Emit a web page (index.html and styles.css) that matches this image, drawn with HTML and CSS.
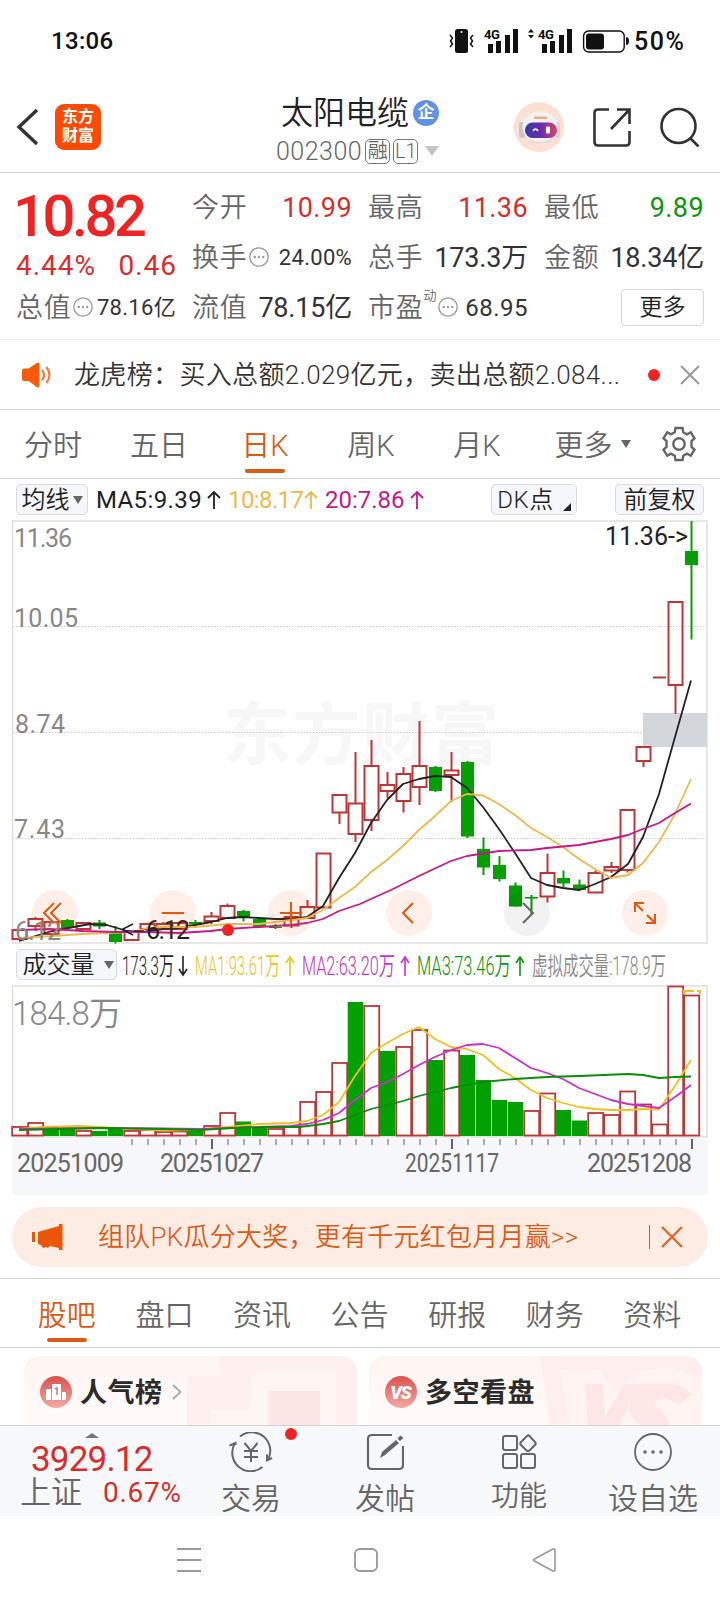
FILE: index.html
```html
<!DOCTYPE html>
<html lang="zh-CN">
<head>
    <meta charset="UTF-8">
    <meta name="viewport" content="width=device-width, initial-scale=1.0">
    <title>太阳电缆 002300</title>
    <link rel="stylesheet" href="styles.css">
</head>
<body>
    <!-- Shared icons -->
    <svg class="defs" width="0" height="0">
        <symbol id="arrow-up" viewBox="0 0 14 20"><path d="M7 19V2M1 8l6-6 6 6" fill="none" stroke="currentColor" stroke-width="1.8"/></symbol>
        <symbol id="dots" viewBox="0 0 20 20"><circle cx="10" cy="10" r="9.2" fill="none" stroke="#999" stroke-width="1.3"/><circle cx="5.8" cy="10" r="1.2" fill="#999"/><circle cx="10" cy="10" r="1.2" fill="#999"/><circle cx="14.2" cy="10" r="1.2" fill="#999"/></symbol>
        <linearGradient id="badge" x1="0" y1="0" x2="0" y2="1"><stop offset="0" stop-color="#d9504c"/><stop offset="1" stop-color="#f3aaa5"/></linearGradient>
        <linearGradient id="visor"><stop offset="0" stop-color="#3b3aa5"/><stop offset=".5" stop-color="#6a2bb0"/><stop offset="1" stop-color="#d8456d"/></linearGradient>
    </svg>

    <div class="status-bar">
        <span class="clock">13:06</span>
        <svg class="signals" width="176" height="30" viewBox="0 0 176 30" fill="#111">
            <rect x="6" y="3" width="13" height="24" rx="2.5"/>
            <circle cx="12.5" cy="6" r="1" fill="#fff"/>
            <path d="M1 9l2.500 3-2 3 2 3-2.500 3M24 9l-2.500 3 2 3-2 3 2.500 3" fill="none" stroke="#111" stroke-width="1.5"/>
            <text class="net" x="35" y="12.5">4G</text>
            <path d="M39 18h5v9h-5zM47 15h5v12h-5zM56 9h5v18h-5zM64 3h5v24h-5zM93 18h5v9h-5zM101 15h5v12h-5zM110 9h5v18h-5zM118 3h5v24h-5z"/>
            <path d="M79 6.500l3-3.500 3 3.500zM79 9l3 3.500 3-3.500z"/>
            <text class="net" x="89" y="12.5">4G</text>
            <rect x="134.6" y="5" width="40.600" height="21" rx="5" fill="none" stroke="#111" stroke-width="1.4"/>
            <rect x="137" y="7.5" width="18" height="16" rx="3"/>
        </svg>
        <svg class="battery-tip" width="3" height="8"><path d="M0 0q3 0 3 4t-3 4z" fill="#111"/></svg>
        <span class="battery">50%</span>
    </div>

    <header class="header">
        <div class="header-left">
            <svg width="24" height="40" viewBox="0 0 24 40"><path d="M21 3L3 20l18 17" fill="none" stroke="#333" stroke-width="3.4"/></svg>
            <div class="logo">东方<br>财富</div>
        </div>
        <div class="stock">
            <div class="stock-name">太阳电缆<span class="company">企</span></div>
            <div class="stock-code">002300<span class="tag">融</span><span class="tag">L1</span><i class="caret-lg"></i></div>
        </div>
        <div class="header-right">
            <svg width="50" height="50" viewBox="0 0 50 50">
                <circle cx="25" cy="25" r="25" fill="#fde0d2"/>
                <path d="M6 13l4 3 4-3-1 8-5 2zM44 11l-5 5-4-2 3 8 4 1z" fill="#eee9ea"/>
                <rect x="5" y="20" width="6" height="16" rx="3" fill="#c9c5cc"/>
                <rect x="40" y="20" width="6" height="16" rx="3" fill="#d7d3d8"/>
                <ellipse cx="26" cy="25" rx="17.5" ry="15.5" fill="#f3f1f2"/>
                <rect x="11" y="20.5" width="32" height="15.5" rx="7.5" fill="url(#visor)"/>
                <path d="M20 14.500h13v2.500h-13z" fill="#e8b184"/>
                <path d="M19 29q2.500-4 5 0" fill="none" stroke="#fff" stroke-width="1.6"/>
                <rect x="32" y="24.5" width="4" height="7" rx="1" fill="#fff"/>
                <path d="M14 37q12 6 24 0l-2 4H17z" fill="#dedade"/>
            </svg>
            <svg width="38" height="39" viewBox="0 0 38 39"><path d="M16 1.500H5q-3.500 0-3.500 3.500v29q0 3.500 3.500 3.500h28q3.500 0 3.500-3.500V23M24 1.500h12.500V16M36.500 1.500L18 21" fill="none" stroke="#333" stroke-width="2.6"/></svg>
            <svg width="40" height="40" viewBox="0 0 40 40"><circle cx="18.5" cy="19" r="17" fill="none" stroke="#333" stroke-width="2.6"/><path d="M30.500 31.500l8 8" stroke="#333" stroke-width="2.6"/></svg>
        </div>
    </header>

    <section class="quote">
        <div class="last">
            <div class="price">10.82</div>
            <div class="change"><span>4.44%</span><span>0.46</span></div>
        </div>
        <div class="cell"><label>今开</label><b class="num red">10.99</b></div>
        <div class="cell"><label>最高</label><b class="num red">11.36</b></div>
        <div class="cell"><label>最低</label><b class="num green">9.89</b></div>
        <div class="cell"><label>换手</label><svg width="20" height="20"><use href="#dots"/></svg><b class="small">24.00%</b></div>
        <div class="cell"><label>总手</label><b>173.3万</b></div>
        <div class="cell"><label>金额</label><b>18.34亿</b></div>
        <div class="cell"><label>总值</label><svg width="20" height="20"><use href="#dots"/></svg><b class="small">78.16亿</b></div>
        <div class="cell"><label>流值</label><b>78.15亿</b></div>
        <div class="cell"><label>市盈</label><sup>动</sup><svg width="20" height="20"><use href="#dots"/></svg><b class="medium">68.95</b></div>
        <div class="cell"><button class="more">更多</button></div>
    </section>

    <section class="notice">
        <svg width="30" height="26" viewBox="0 0 30 26"><path d="M0 8.500q0-2 2-2h4q1 0 2-1L14 1.500q3.500-2.500 3.500 1v21q0 3.500-3.500 1L8 20q-1-1-2-1H2q-2 0-2-2z" fill="#ff5a0a"/><path d="M20 8q4 5 0 10M24.500 5q6 8 0 16" fill="none" stroke="#f47a3c" stroke-width="2.2"/></svg>
        <span class="notice-text">龙虎榜：买入总额2.029亿元，卖出总额2.084...</span>
        <i class="dot"></i>
        <svg width="20" height="20" viewBox="0 0 20 20"><path d="M1 1l18 18M19 1L1 19" stroke="#999" stroke-width="2"/></svg>
    </section>

    <nav class="period-tabs">
        <span>分时</span>
        <span>五日</span>
        <span class="active">日K</span>
        <span>周K</span>
        <span>月K</span>
        <span class="wide">更多<i class="caret"></i></span>
        <svg width="36" height="36" viewBox="0 0 36 36" fill="none" stroke="#666" stroke-width="2.4"><path d="M14.500 2h7l.8 4.300 3.700 2.100 3.800-2.100 3.700 6-3 2.800v5.800l3 2.800-3.700 6-3.800-2.100-3.700 2.100-.8 4.300h-7l-.8-4.300-3.700-2.100-3.800 2.100-3.700-6 3-2.800v-5.800l-3-2.800 3.700-6L10 8.400l3.700-2.100z"/><circle cx="18" cy="18" r="5.7"/></svg>
    </nav>

    <div class="legend">
        <button class="pill ma-btn">均线<i class="caret"></i></button>
        <span class="ma ma5">MA5:9.39<svg width="14" height="20"><use href="#arrow-up"/></svg></span>
        <span class="ma ma10">10:8.17<svg width="14" height="20"><use href="#arrow-up"/></svg></span>
        <span class="ma ma20">20:7.86<svg width="14" height="20"><use href="#arrow-up"/></svg></span>
        <button class="pill dk-btn">DK点<i class="corner"></i></button>
        <button class="pill fq-btn">前复权</button>
    </div>

    <div class="chart">
        <svg id="kline" width="720" height="424" viewBox="0 520 720 424"></svg>
        <div class="chart-tools">
            <span class="tool"><svg viewBox="0 0 46 46"><path d="M22 13L12 23l10 10M29 13L19 23l10 10"/></svg></span>
            <span class="tool"><svg viewBox="0 0 46 46"><path d="M12 23h22"/></svg></span>
            <span class="tool"><svg viewBox="0 0 46 46"><path d="M12 23h22M23 12v22"/></svg></span>
            <span class="tool"><svg viewBox="0 0 46 46"><path d="M27 13L17 23l10 10"/></svg></span>
            <span class="tool gray"><svg viewBox="0 0 46 46"><path d="M19 13l10 10-10 10"/></svg></span>
            <span class="tool"><svg viewBox="0 0 46 46"><path d="M13 22v-9h9M13 13l8 8M25 25l8 8M24 33h9v-9"/></svg></span>
        </div>
    </div>

    <div class="legend volume-legend">
        <button class="pill vol-btn">成交量<i class="caret"></i></button>
        <svg width="555" height="40" viewBox="117 944 555 40">
            <g class="vol-text">
                <text x="122" y="974" textLength="52" lengthAdjust="spacingAndGlyphs" fill="#222">173.3万</text>
                <text x="195" y="974" textLength="85" lengthAdjust="spacingAndGlyphs" fill="#efc11f">MA1:93.61万</text>
                <text x="302" y="974" textLength="93" lengthAdjust="spacingAndGlyphs" fill="#c832c8">MA2:63.20万</text>
                <text x="417" y="974" textLength="94" lengthAdjust="spacingAndGlyphs" fill="#0a960a">MA3:73.46万</text>
                <text x="532" y="974" textLength="134" lengthAdjust="spacingAndGlyphs" fill="#888">虚拟成交量:178.9万</text>
            </g>
            <g fill="none" stroke-width="1.6">
                <path d="M183 955v19M179 968l4 6 4-6" stroke="#222"/>
                <path d="M290 975v-19M286 962l4-6 4 6" stroke="#efc11f"/>
                <path d="M405 975v-19M401 962l4-6 4 6" stroke="#c832c8"/>
                <path d="M520 975v-19M516 962l4-6 4 6" stroke="#0a960a"/>
            </g>
        </svg>
    </div>

    <div class="volume">
        <svg id="volume" width="720" height="211" viewBox="0 985 720 211"></svg>
    </div>

    <div class="banner">
        <svg width="31" height="28" viewBox="0 0 31 28" fill="#eb5503"><path d="M0 9h3v10H0zM6 9l21-6V1h3.500v26H27v-2l-9-2-2 2-2-1-3 1-2-3-3-1z"/></svg>
        <span class="banner-text">组队PK瓜分大奖，更有千元红包月月赢&gt;&gt;</span>
        <i class="divider"></i>
        <svg width="22" height="22" viewBox="0 0 22 22"><path d="M1 1l20 20M21 1L1 21" stroke="#e4662a" stroke-width="2.4"/></svg>
    </div>

    <nav class="info-tabs">
        <span class="active">股吧</span>
        <span>盘口</span>
        <span>资讯</span>
        <span>公告</span>
        <span>研报</span>
        <span>财务</span>
        <span>资料</span>
    </nav>

    <section class="cards">
        <div class="card">
            <svg class="card-bg" width="170" height="70" viewBox="0 0 170 70"><path d="M32 0h138v70H0V20h32z" fill="#fef0ef"/><path d="M65 16h84v54H24V54h38z" fill="#fff5f3"/><path d="M82 35h51v35H82z" fill="#fbe5e5"/></svg>
            <svg width="32" height="32" viewBox="0 0 32 32"><circle cx="16" cy="16" r="16" fill="url(#badge)"/><path d="M6 13h5v11H6zM12 8h9v16h-9zM22 16h4v8h-4z" fill="#fff"/><path d="M15 13l2-1v7" fill="none" stroke="#dd716c" stroke-width="1.5"/></svg>
            <span class="card-title">人气榜</span>
            <svg width="10" height="16" viewBox="0 0 10 16"><path d="M1 1l7.500 7L1 15" fill="none" stroke="#aaa" stroke-width="1.8"/></svg>
        </div>
        <div class="card">
            <svg class="card-bg" width="162" height="70" viewBox="0 0 162 70"><path d="M0 0h162v70H10z" fill="#feefee"/><path d="M20 14h40l18 26 14-20q12-8 42-8l28 12v46H30z" fill="#fff4f2"/><path d="M45 28h18l2 32 20-32h45q12 0 22 10l-12 11q-8-7-20-6-12 2-2 9 8 4 12 18h-28q-14-8-12-22L78 70H48z" fill="#fce6e6"/></svg>
            <svg width="32" height="32" viewBox="0 0 32 32"><circle cx="16" cy="16" r="16" fill="url(#badge)"/><text class="vs" x="15.5" y="23">VS</text></svg>
            <span class="card-title">多空看盘</span>
        </div>
    </section>

    <footer class="bottom-bar">
        <div class="index">
            <i class="caret-up"></i>
            <div class="index-value">3929.12</div>
            <div class="index-row"><span>上证</span><span class="index-change">0.67%</span></div>
        </div>
        <div class="action">
            <svg width="44" height="40" viewBox="0 0 44 40" fill="none" stroke="#666" stroke-width="2"><path d="M11 4.500A18.500 18.500 0 0 1 38.500 28.500M38 22.500v6l5-2.500M33.500 35A18.500 18.500 0 0 1 6 11M0.500 13.500L6.500 11v2M15.500 11l6.500 8 6.500-8M15 19h14M15 25h14M22 19v11"/></svg>
            <span>交易</span>
            <i class="dot"></i>
        </div>
        <div class="action">
            <svg width="38" height="40" viewBox="0 0 38 40" fill="none" stroke="#666" stroke-width="2.2"><path d="M26 3H6Q2 3 2 7v26q0 4 4 4h27q4 0 4-4V14"/><path d="M14 26l2-6L30 8l3 3-14 12zM31.500 6.500l3-3 3 2.500-3.500 3z" fill="#666" stroke="none"/></svg>
            <span>发帖</span>
        </div>
        <div class="action">
            <svg width="36" height="40" viewBox="0 0 36 40" fill="none" stroke="#666" stroke-width="2"><rect x="2" y="4" width="14" height="14" rx="2"/><rect x="2" y="22" width="14" height="14" rx="2"/><rect x="20" y="22" width="14" height="14" rx="2"/><path d="M26 4l-6 6q-1.500 1.500 0 3l5.500 5.500q1.500 1.500 3 0L34 13q1.500-1.500 0-3l-5.500-6q-1.300-1.200-2.500 0z"/></svg>
            <span class="narrow">功能</span>
        </div>
        <div class="action">
            <svg width="40" height="40" viewBox="0 0 40 40"><circle cx="20" cy="20" r="18" fill="none" stroke="#666" stroke-width="1.8"/><g fill="#666"><circle cx="12" cy="20" r="1.8"/><circle cx="20" cy="20" r="1.8"/><circle cx="28" cy="20" r="1.8"/></g></svg>
            <span>设自选</span>
        </div>
    </footer>

    <div class="system-nav">
        <svg width="24" height="26" viewBox="0 0 24 26"><path d="M0 2h24M0 13h24M0 24h24" stroke="#999" stroke-width="1.8"/></svg>
        <svg width="26" height="26" viewBox="0 0 26 26"><rect x="2" y="2" width="22" height="22" rx="5" fill="none" stroke="#999" stroke-width="1.8"/></svg>
        <svg width="26" height="26" viewBox="0 0 26 26"><path d="M3.500 12L21 2.500q3-1.500 3 1v19q0 2.500-3 1L3.500 14q-2-1 0-2z" fill="none" stroke="#999" stroke-width="1.6"/></svg>
    </div>

    <script src="chart.js"></script>
</body>
</html>
```

FILE: styles.css
```css
/* Base styling */
* {
    box-sizing: border-box;
}

body {
    margin: 0;
    width: 720px;
    height: 1604px;
    overflow: hidden;
    background-color: #fff;
    color: #333;
    font-family: Roboto, "Noto Sans CJK SC", sans-serif;
    font-weight: 350;
    line-height: 1;
}

svg {
    display: block;
    flex: none;
}

button {
    font: inherit;
    color: #222;
    padding: 0;
}

.defs {
    position: absolute;
}

.red {
    color: #dc2b2b;
}

.green {
    color: #0a960a;
}

.dot {
    width: 12px;
    height: 12px;
    border-radius: 50%;
    background-color: #f02323;
}

.caret {
    border: 5px solid transparent;
    border-top: 8px solid #666;
    border-bottom: 0;
}

/* Status bar */
.status-bar {
    display: flex;
    align-items: center;
    height: 82px;
    padding-left: 51px;
    color: #111;
    font-size: 24px;
    font-weight: 500;
}

.clock {
    width: 398px;
    letter-spacing: 0.3px;
}

.net {
    font-size: 13px;
    font-weight: 700;
    letter-spacing: -0.5px;
}

.battery-tip {
    margin-left: 1px;
}

.battery {
    margin-left: 5px;
    font-size: 25px;
    letter-spacing: 1.5px;
}

/* Header */
.header {
    display: grid;
    grid-template-columns: 240px 240px 240px;
    height: 91px;
    border-bottom: 1px solid #d8d8d8;
}

.header-left {
    display: flex;
    align-items: center;
    padding: 0 0 0 16px;
    height: 90px;
}

.logo {
    margin-left: 15px;
    width: 46px;
    height: 46px;
    border-radius: 9px;
    background-color: #ff4a04;
    color: #fff;
    font-size: 16px;
    font-weight: 700;
    line-height: 19px;
    padding-top: 3px;
    text-align: center;
}

.stock {
    padding: 15px 0 0 36px;
}

.stock-name {
    display: flex;
    align-items: center;
    height: 32px;
    margin-left: 5px;
    font-size: 32px;
    color: #222;
}

.company {
    width: 26px;
    height: 26px;
    margin-left: 4px;
    border-radius: 50%;
    background-color: #6290e8;
    color: #fff;
    font-size: 17px;
    font-weight: 700;
    line-height: 25px;
    text-align: center;
}

.stock-code {
    display: flex;
    align-items: center;
    margin-top: 9px;
    height: 26px;
    font-size: 25px;
    letter-spacing: 0.5px;
    color: #666;
}

.tag {
    width: 25px;
    height: 25px;
    margin-left: 3px;
    border: 1px solid #777;
    border-radius: 5px;
    font-size: 20px;
    letter-spacing: 0;
    line-height: 22px;
    text-align: center;
}

.caret-lg {
    margin-left: 7px;
    border: 7px solid transparent;
    border-top: 10px solid #c4c4c4;
    border-bottom: 0;
}

.header-right {
    display: flex;
    align-items: center;
    gap: 29px;
    padding-left: 34px;
}

/* Quote */
.quote {
    display: grid;
    grid-template-columns: repeat(4, 160px);
    grid-template-rows: 50px 50px 50px;
    column-gap: 16px;
    height: 167px;
    padding: 10px 16px;
    border-bottom: 1px solid #ededed;
    font-size: 27px;
}

.last {
    grid-row: span 2;
    color: #dc2b2b;
}

.price {
    margin: 4px 0 0 -3px;
    font-size: 58px;
    font-weight: 500;
    letter-spacing: -3.5px;
    color: #f02323;
}

.change {
    display: flex;
    justify-content: space-between;
    margin-top: 7px;
    font-size: 28px;
    font-weight: 400;
    letter-spacing: 1px;
}

.change span:last-child {
    margin-right: -1px;
}

.cell {
    display: flex;
    align-items: center;
    height: 50px;
    white-space: nowrap;
}

.cell label {
    color: #666;
    letter-spacing: 0.8px;
}

.cell b {
    margin-left: auto;
    font-weight: 400;
    letter-spacing: -0.2px;
}

.cell .num {
    letter-spacing: 0.4px;
}

.cell .small {
    font-size: 22px;
    letter-spacing: 0.3px;
}

.cell .medium {
    font-size: 24px;
    letter-spacing: 0.5px;
}

.cell sup {
    align-self: flex-start;
    margin-top: 6px;
    font-size: 13px;
    line-height: 14px;
    color: #666;
}

.cell svg {
    margin: -3px 0 0 1px;
}

.more {
    width: 83px;
    height: 37px;
    margin: -2px 0 0 auto;
    background-color: #fff;
    border: 1px solid #d9d9d9;
    border-radius: 4px;
    font-size: 23px;
}

/* Notice */
.notice {
    display: flex;
    align-items: center;
    height: 70px;
    padding-left: 22px;
    border-bottom: 1px solid #d4d4d4;
    font-size: 26px;
    white-space: nowrap;
}

.notice-text {
    width: 574px;
    margin-left: 22px;
    letter-spacing: 0.35px;
}

.notice .dot {
    margin-right: 20px;
}

/* Period tabs */
.period-tabs {
    display: flex;
    align-items: center;
    height: 69px;
    border-bottom: 1px solid #d4d4d4;
    color: #666;
    font-size: 29px;
}

.period-tabs span {
    position: relative;
    display: flex;
    align-items: center;
    justify-content: center;
    width: 106px;
    height: 68px;
    padding-top: 5px;
}

.period-tabs .wide {
    width: 131px;
    padding-right: 6px;
}

.wide .caret {
    margin: -5px 0 0 8px;
}

.period-tabs .active,
.info-tabs .active {
    color: #dd5a14;
}

.active::after {
    content: "";
    position: absolute;
    bottom: 5px;
    left: 50%;
    width: 40px;
    height: 4px;
    margin-left: -20px;
    border-radius: 2px;
    background-color: #dd5a14;
}

/* Indicator legends */
.legend {
    display: flex;
    align-items: center;
    height: 41px;
    padding: 0 16px;
    font-size: 24px;
}

.pill {
    display: flex;
    align-items: center;
    justify-content: center;
    height: 31px;
    background-color: #f6f7fa;
    border: 1px solid #d8dade;
    border-radius: 5px;
}

.ma-btn {
    width: 72px;
    margin-right: 8px;
}

.ma-btn .caret {
    margin-left: 3px;
}

.ma {
    display: flex;
    align-items: center;
    justify-content: space-between;
    font-weight: 400;
}

.ma5 {
    width: 125px;
    letter-spacing: 0.4px;
    color: #222;
}

.ma10 {
    width: 90px;
    margin-left: 7px;
    letter-spacing: -0.6px;
    color: #eeb94a;
}

.ma20 {
    width: 99px;
    margin-left: 7px;
    color: #c4198a;
}

.dk-btn {
    width: 86px;
    margin-left: 67px;
    letter-spacing: 0.6px;
}

.corner {
    align-self: flex-end;
    margin: 0 0 3px 9px;
    border-left: 8px solid transparent;
    border-bottom: 8px solid #222;
}

.fq-btn {
    width: 89px;
    margin-left: 38px;
}

.volume-legend {
    padding-right: 0;
}

.vol-btn {
    width: 101px;
}

.vol-btn .caret {
    margin-left: 9px;
    margin-right: -3px;
}

.vol-text {
    font-size: 25px;
    font-weight: 350;
}

/* Charts */
.chart {
    position: relative;
    height: 424px;
}

.chart-tools {
    position: absolute;
    left: 32px;
    bottom: 8px;
    display: flex;
    gap: 72px;
}

.tool {
    width: 46px;
    height: 46px;
    border-radius: 50%;
    background-color: rgba(255, 100, 30, 0.1);
}

.tool path {
    fill: none;
    stroke: #e2570c;
    stroke-width: 2;
}

.tool.gray {
    background-color: rgba(0, 0, 0, 0.05);
}

.tool.gray path {
    stroke: #666;
}

.watermark {
    font-size: 68px;
    font-weight: 700;
    fill: #f7f7f7;
}

.axis-label {
    font-size: 25px;
    font-weight: 400;
    fill: #888;
}

.axis-label.volume-max {
    font-size: 33px;
    font-weight: 350;
}

.mark-label {
    font-size: 25px;
    font-weight: 400;
    fill: #222;
}

.date-label {
    font-size: 25px;
    font-weight: 400;
    fill: #666;
}

.volume {
    height: 222px;
}

/* Banner */
.banner {
    display: flex;
    align-items: center;
    width: 696px;
    height: 60px;
    margin: 0 12px 11px;
    padding-left: 20px;
    border-radius: 30px;
    background-color: #fcece4;
    color: #dd5a14;
    font-size: 26px;
}

.banner-text {
    width: 551px;
    margin-left: 35px;
    letter-spacing: 0.25px;
}

.divider {
    width: 1px;
    height: 24px;
    margin-right: 11px;
    background-color: #dd5a14;
}

/* Info tabs */
.info-tabs {
    display: flex;
    height: 70px;
    padding-left: 18px;
    border-top: 1px solid #d4d4d4;
    border-bottom: 1px solid #d4d4d4;
    color: #666;
    font-size: 29px;
}

.info-tabs span {
    position: relative;
    width: 97.6px;
    line-height: 74px;
    text-align: center;
}

/* Cards */
.cards {
    display: flex;
    gap: 12px;
    height: 77px;
    padding: 8px 0 0 24px;
    overflow: hidden;
}

.card {
    position: relative;
    display: flex;
    align-items: center;
    width: 333px;
    height: 90px;
    padding: 0 0 18px 16px;
    border-radius: 16px;
    background: linear-gradient(#fff4f2, #fffaf8 60%);
    overflow: hidden;
}

.card-bg {
    position: absolute;
    right: 0;
    top: 0;
}

.card-title {
    position: relative;
    margin: 2px 9px 0 8px;
    color: #2b2b2b;
    font-size: 27px;
    font-weight: 700;
    letter-spacing: 0.5px;
}

.vs {
    font-size: 18px;
    font-weight: 900;
    font-style: italic;
    letter-spacing: -1px;
    fill: #fff;
    text-anchor: middle;
}

/* Bottom bar */
.bottom-bar {
    display: flex;
    height: 91px;
    border-top: 1px solid #d4d4d4;
    background-color: #f7f8fa;
    color: #666;
}

.index {
    width: 184px;
    padding-left: 20px;
}

.caret-up {
    display: block;
    width: 0;
    margin: 7px 0 0 65px;
    border: 7px solid transparent;
    border-top: 0;
    border-bottom: 5px solid #777;
}

.index-value {
    margin: 4px 0 0 11px;
    font-size: 35px;
    font-weight: 400;
    letter-spacing: -0.8px;
    color: #dc2b2b;
}

.index-row {
    display: flex;
    align-items: center;
    font-size: 31px;
}

.index-change {
    margin-left: 21px;
    font-size: 28px;
    font-weight: 400;
    letter-spacing: 0.7px;
    color: #dc2b2b;
}

.action {
    position: relative;
    display: flex;
    flex-direction: column;
    align-items: center;
    width: 134px;
    padding-top: 6px;
    font-size: 30px;
}

.action span {
    margin-top: 12px;
}

.action .narrow {
    margin-top: 11px;
    font-size: 28px;
}

.action .dot {
    position: absolute;
    left: 101px;
    top: 2px;
}

/* System navigation */
.system-nav {
    display: flex;
    gap: 152px;
    padding: 31px 0 0 177px;
}
```

FILE: chart.js
```javascript
// Each candle: [color, body top, body bottom, high, low]
const candles = [
    ['r', 930, 939, 930, 939], ['r', 919, 926, 917, 931], ['r', 922, 934, 922, 934], ['g', 920, 928, 919, 928],
    ['r', 923, 929, 923, 929], ['g', 922.5, 926.5, 920, 929], ['g', 931.5, 942, 926, 943.5], ['r', 932, 940, 932, 940],
    ['r', 924, 929, 924, 929], ['r', 924, 929, 922, 929], ['r', 923, 929, 923, 929], ['g', 922, 924.5, 920, 924.5],
    ['r', 916.5, 921, 912, 924], ['r', 906, 918, 903.5, 918], ['g', 911, 917, 910, 921.5], ['g', 919, 927, 919, 927],
    ['g', 927, 928, 924, 929], ['r', 917, 925.5, 915, 928], ['r', 907, 918, 900, 918], ['r', 853.5, 907.5, 853.5, 907.5],
    ['r', 795, 812.5, 795, 824], ['r', 803.5, 834, 752, 842], ['r', 766, 820, 740, 831], ['r', 785, 791, 772, 798],
    ['r', 774, 801, 767, 812.5], ['r', 766, 787, 721, 805], ['g', 767, 791, 766, 792], ['r', 770.5, 775, 752, 802],
    ['g', 762, 836.5, 761, 838], ['g', 849, 867.5, 837.5, 875], ['g', 865, 879, 856, 881.5], ['g', 885.5, 906.5, 882.5, 906.5],
    ['g', 897, 898.5, 895, 914], ['r', 873, 896.5, 853.5, 902.5], ['g', 878, 883.5, 870.5, 887], ['g', 884.5, 890, 879.5, 891],
    ['r', 873, 892.5, 870.5, 892.5], ['r', 867, 870.5, 862, 873], ['r', 810, 870, 810, 872.5], ['r', 747, 761, 747, 767],
    ['r', 677.5, 677.5, 677.5, 677.5], ['r', 602, 685, 602, 714], ['g', 551, 565, 521, 639.5]
];

const ma5 = [[19, 941], [52, 931], [90, 924], [107, 925], [127, 931], [143, 932], [163, 929], [179, 928], [195, 925], [211, 922], [227, 918], [243, 917], [259, 918], [275, 919], [291, 919], [307, 917], [323, 906], [339, 878], [355, 853], [371, 823], [387, 800], [403, 784], [419, 779], [435, 776], [451, 777], [467, 788], [483, 807], [499, 829], [515, 853], [531, 878], [547, 885], [563, 888], [579, 890], [595, 884], [611, 877], [628, 864], [643, 837], [659, 794], [675, 737], [691, 680.5]];
const ma10 = [[19, 938], [52, 936], [83, 934], [132, 932], [147, 928], [163, 927], [195, 927], [227, 924], [259, 924], [275, 922], [291, 920], [307, 918], [323, 910], [339, 898], [355, 887], [371, 872], [387, 860], [403, 846], [419, 830], [435, 816], [451, 801], [467, 794], [483, 795.5], [499, 804], [515, 815], [531, 828], [547, 837], [563, 847], [579, 859], [595, 869], [611, 878], [628, 875], [643, 863], [659, 842], [675, 814], [691, 779]];
const ma20 = [[19, 930], [50, 929], [83, 931], [115, 932], [147, 932], [179, 933], [211, 931], [227, 929], [259, 927], [291, 925], [307, 923], [323, 919], [339, 911], [360, 904], [393, 889], [419, 876], [451, 861], [467, 856], [499, 851], [531, 850], [547, 848], [579, 845], [611, 839], [628, 835], [643, 829], [659, 823], [675, 813], [691, 803.5]];

// Bar colour and top of each volume bar
const volumes = [
    ['r', 1127], ['r', 1123], ['g', 1127], ['g', 1127.5], ['r', 1131], ['g', 1131], ['g', 1127.5], ['r', 1131], ['r', 1130], ['r', 1132], ['r', 1131.5],
    ['g', 1130.5], ['r', 1126], ['r', 1113], ['g', 1121.5], ['g', 1127.5], ['r', 1129], ['r', 1127], ['r', 1102], ['r', 1092], ['r', 1063],
    ['g', 1002], ['r', 1006], ['g', 1051], ['r', 1047], ['r', 1030], ['g', 1060], ['r', 1050.5], ['g', 1055], ['g', 1080], ['g', 1100],
    ['g', 1102], ['r', 1111], ['r', 1093.5], ['g', 1110], ['g', 1120.5], ['r', 1113], ['r', 1115], ['r', 1091.5], ['r', 1104.5], ['r', 1124.5],
    ['r', 986.5], ['r', 995.5]
];

const vol1 = [[19, 1129], [43, 1127], [80, 1126], [117, 1128], [163, 1130.5], [195, 1130], [227, 1127], [259, 1124], [291, 1123], [307, 1121], [323, 1115], [339, 1102], [355, 1076], [371, 1053], [387, 1043], [403, 1034], [419, 1027], [435, 1039], [451, 1047], [467, 1049], [483, 1055], [499, 1069], [515, 1078], [531, 1090], [547, 1098], [563, 1103], [579, 1107], [595, 1109], [611, 1110], [628, 1110], [643, 1109], [659, 1109.5], [675, 1086], [691, 1060]];
const vol2 = [[19, 1129], [100, 1128], [163, 1128.5], [200, 1129], [227, 1128], [259, 1127], [291, 1126], [307, 1124], [323, 1120], [339, 1113], [355, 1100], [371, 1088], [387, 1082], [403, 1074], [419, 1065], [435, 1057], [451, 1050], [467, 1045], [483, 1044], [499, 1048], [515, 1058], [531, 1068], [547, 1073], [563, 1079], [579, 1088], [595, 1094], [611, 1100], [628, 1104], [643, 1106], [659, 1108], [675, 1097], [691, 1085]];
const vol3 = [[19, 1130], [100, 1128], [163, 1129], [200, 1130], [233, 1128], [267, 1127], [300, 1127], [323, 1124], [339, 1121], [355, 1115], [371, 1109], [403, 1101], [419, 1096], [451, 1088], [483, 1082], [515, 1079], [547, 1077], [579, 1076], [628, 1074], [643, 1075], [659, 1078], [675, 1077], [691, 1076.5]];

const RED = '#bf3434';
const GREEN = '#03a003';

function line(points, color) {
    return `<polyline points="${points.join(' ')}" fill="none" stroke="${color}" stroke-width="1.8" stroke-linejoin="round"/>`;
}

function drawKline() {
    let out = '<text class="watermark" x="223" y="759" textLength="276">东方财富</text>';
    [626.5, 732.5, 838.5].forEach(y => {
        out += `<path d="M13 ${y}H707" stroke="#ccc" stroke-dasharray="1.5 1.5"/>`;
    });
    out += '<path d="M12.500 943V521H707V943z" fill="none" stroke="#e0e0e0" stroke-width="1.5"/>';
    out += '<rect x="643" y="713" width="64" height="34" fill="#d3d6db"/>';

    candles.forEach(([color, top, bottom, high, low], i) => {
        const x = 19.5 + i * 16;
        if (color === 'g') {
            out += `<path d="M${x} ${high}V${low}" stroke="${GREEN}" stroke-width="2"/>`;
            out += `<rect x="${x - 6.5}" y="${top}" width="13" height="${bottom - top}" fill="${GREEN}"/>`;
        } else if (top === bottom) {
            out += `<path d="M${x - 6.5} ${top}h13" stroke="${RED}" stroke-width="2"/>`;
        } else {
            out += `<path d="M${x} ${high}V${top}M${x} ${bottom}V${low}" stroke="${RED}" stroke-width="2"/>`;
            out += `<rect x="${x - 7}" y="${top}" width="14" height="${bottom - top}" fill="none" stroke="${RED}" stroke-width="2"/>`;
        }
    });

    out += line(ma5, '#222') + line(ma10, '#eeb94a') + line(ma20, '#c4198a');
    out += '<circle cx="228" cy="930" r="6" fill="#f02323"/>';
    out += '<path d="M133 924l-11 5.500 11 5.500M134 931h10" fill="none" stroke="#222" stroke-width="1.5"/>';
    out += '<text class="mark-label" x="146" y="939" textLength="44">6.12</text>';
    out += '<text class="mark-label" x="605" y="545" textLength="83">11.36-&gt;</text>';
    out += '<text class="axis-label" x="14" y="547" textLength="58">11.36</text>';
    out += '<text class="axis-label" x="14" y="627" textLength="64">10.05</text>';
    out += '<text class="axis-label" x="15" y="733" textLength="50">8.74</text>';
    out += '<text class="axis-label" x="14" y="838" textLength="51">7.43</text>';
    out += '<text class="axis-label" x="15" y="940" textLength="46">6.12</text>';
    document.getElementById('kline').innerHTML = out;
}

function drawVolume() {
    let out = '<rect x="12" y="1139" width="696" height="56" fill="#f6f7fa"/>';
    out += '<path d="M12.500 1137V986H707V1137z" fill="none" stroke="#e0e0e0" stroke-width="1.5"/>';
    out += '<text class="axis-label volume-max" x="12" y="1025" textLength="110">184.8万</text>';

    volumes.forEach(([color, top], i) => {
        const x = 11.7 + i * 16;
        if (color === 'g') {
            out += `<rect x="${x}" y="${top}" width="15.3" height="${1136 - top}" fill="${GREEN}"/>`;
        } else {
            out += `<rect x="${x + 0.5}" y="${top}" width="15" height="${1135.5 - top}" fill="#fff" stroke="${RED}" stroke-width="1.8"/>`;
        }
    });
    out += '<path d="M684 994v-3h16v3" fill="none" stroke="#efc11f" stroke-width="2" stroke-dasharray="13 3"/>';
    out += line(vol1, '#efc11f') + line(vol2, '#c832c8') + line(vol3, '#0a8c0a');

    // Day ticks, longer at the labelled dates
    for (let i = 7; i < 43; i++) {
        const x = 20 + i * 16;
        const major = i === 12 || i === 27 || i === 42;
        out += `<path d="M${x} 1139v${major ? 10 : 6}" stroke="${major ? '#666' : '#aaa'}" stroke-width="2"/>`;
    }
    out += '<text class="date-label" x="17" y="1171.5" textLength="107">20251009</text>';
    out += '<text class="date-label" x="160" y="1171.5" textLength="104">20251027</text>';
    out += '<text class="date-label" x="405" y="1171.5" textLength="94" lengthAdjust="spacingAndGlyphs">20251117</text>';
    out += '<text class="date-label" x="587" y="1171.5" textLength="105">20251208</text>';
    document.getElementById('volume').innerHTML = out;
}

drawKline();
drawVolume();
```
